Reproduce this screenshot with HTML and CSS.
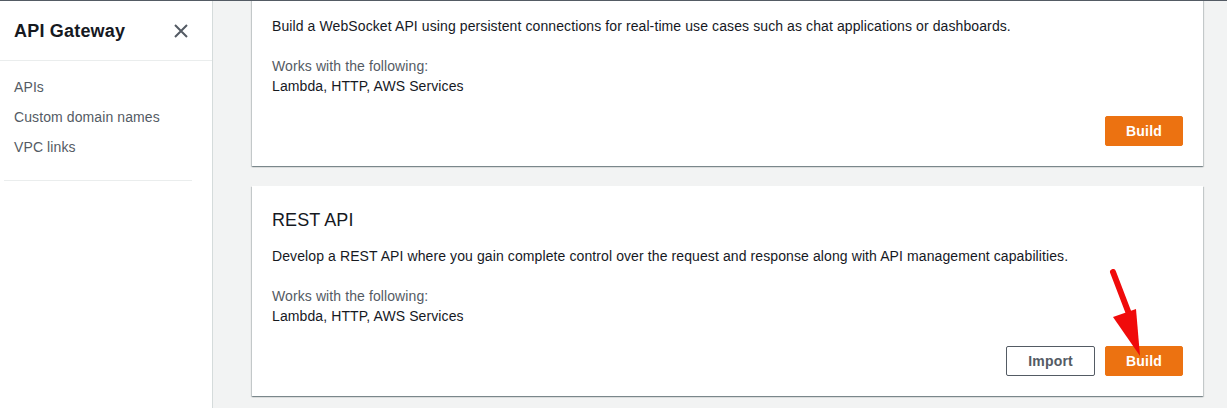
FILE: index.html
```html
<!DOCTYPE html>
<html>
<head>
<meta charset="utf-8">
<link rel="stylesheet" href="styles.css">
</head>
<body>
<div class="topline"></div>
<div class="layout">
  <aside class="sidebar">
    <div class="side-header">
      <span class="side-title">API Gateway</span>
      <svg class="close" width="16" height="16" viewBox="0 0 16 16"><path d="M2 2 L14 14 M14 2 L2 14" stroke="#545b64" stroke-width="2" fill="none"/></svg>
    </div>
    <nav class="side-nav">
      <a>APIs</a>
      <a>Custom domain names</a>
      <a>VPC links</a>
    </nav>
    <div class="side-divider"></div>
  </aside>
  <main class="main">
    <section class="card">
      <p class="desc">Build a WebSocket API using persistent connections for real-time use cases such as chat applications or dashboards.</p>
      <p class="works"><span class="muted">Works with the following:</span><br>Lambda, HTTP, AWS Services</p>
      <div class="actions"><button class="btn primary">Build</button></div>
    </section>
    <section class="card">
      <h2 class="card-title">REST API</h2>
      <p class="desc">Develop a REST API where you gain complete control over the request and response along with API management capabilities.</p>
      <p class="works"><span class="muted">Works with the following:</span><br>Lambda, HTTP, AWS Services</p>
      <div class="actions"><button class="btn normal">Import</button><button class="btn primary">Build</button></div>
      <svg class="arrow" width="40" height="92" viewBox="0 0 40 92"><path d="M4 3 L22 50" stroke="#f00b0b" stroke-width="6" stroke-linecap="round" fill="none"/><path d="M4 48 L27 40 L31 87 Z" fill="#f00b0b"/></svg>
    </section>
  </main>
</div>
</body>
</html>
```

FILE: styles.css
```css
* { box-sizing: border-box; }
html, body { margin: 0; padding: 0; }
body {
  font-family: "Liberation Sans", Arial, sans-serif;
  font-size: 14px;
  line-height: 20px;
  letter-spacing: 0.1px;
  color: #16191f;
  background: #f2f3f3;
  height: 408px;
  overflow: hidden;
}
.topline {
  position: fixed;
  top: 0; left: 0; right: 0;
  height: 1px;
  background: #545b64;
  z-index: 5;
}
.layout {
  display: flex;
  height: 408px;
}
.sidebar {
  width: 213px;
  flex: none;
  background: #fff;
  border-right: 1px solid #d5dbdb;
}
.side-header {
  height: 61px;
  display: flex;
  align-items: center;
  justify-content: space-between;
  padding: 1px 23px 0 14px;
  border-bottom: 1px solid #eaeded;
}
.side-title {
  font-size: 18px;
  font-weight: 700;
  line-height: 22px;
  letter-spacing: 0.2px;
}
.close { display: block; }
.side-nav {
  display: flex;
  flex-direction: column;
  padding: 11px 0 18px 14px;
}
.side-nav a {
  color: #545b64;
  line-height: 20px;
  padding: 5px 0;
}
.side-divider {
  margin: 0 20px 0 4px;
  border-top: 1px solid #eaeded;
}
.main {
  flex: 1;
  padding: 0 24px 0 39px;
  margin-top: -4px;
  display: flex;
  flex-direction: column;
  gap: 20px;
}
.card {
  position: relative;
  background: #fff;
  padding: 20px;
  box-shadow: 0 1px 1px 0 rgba(0,28,36,.3), 1px 1px 1px 0 rgba(0,28,36,.15), -1px 1px 1px 0 rgba(0,28,36,.15);
}
.card-title {
  margin: 0 0 12px;
  font-size: 18px;
  font-weight: 400;
  line-height: 28px;
}
.desc { margin: 0 0 20px; }
.works { margin: 0 0 20px; }
.muted { color: #545b64; }
.actions {
  display: flex;
  justify-content: flex-end;
  gap: 10px;
}
.btn {
  font-family: inherit;
  font-size: 14px;
  font-weight: 700;
  line-height: 20px;
  letter-spacing: 0.2px;
  height: 30px;
  border-radius: 2px;
  padding: 4px 20px;
  cursor: pointer;
}
.btn.primary {
  background: #ec7211;
  border: 1px solid #ec7211;
  color: #fff;
}
.btn.normal {
  background: #fff;
  border: 1px solid #545b64;
  color: #545b64;
  padding: 4px 21px;
}
.arrow {
  position: absolute;
  left: 857px;
  top: 83px;
}
```
